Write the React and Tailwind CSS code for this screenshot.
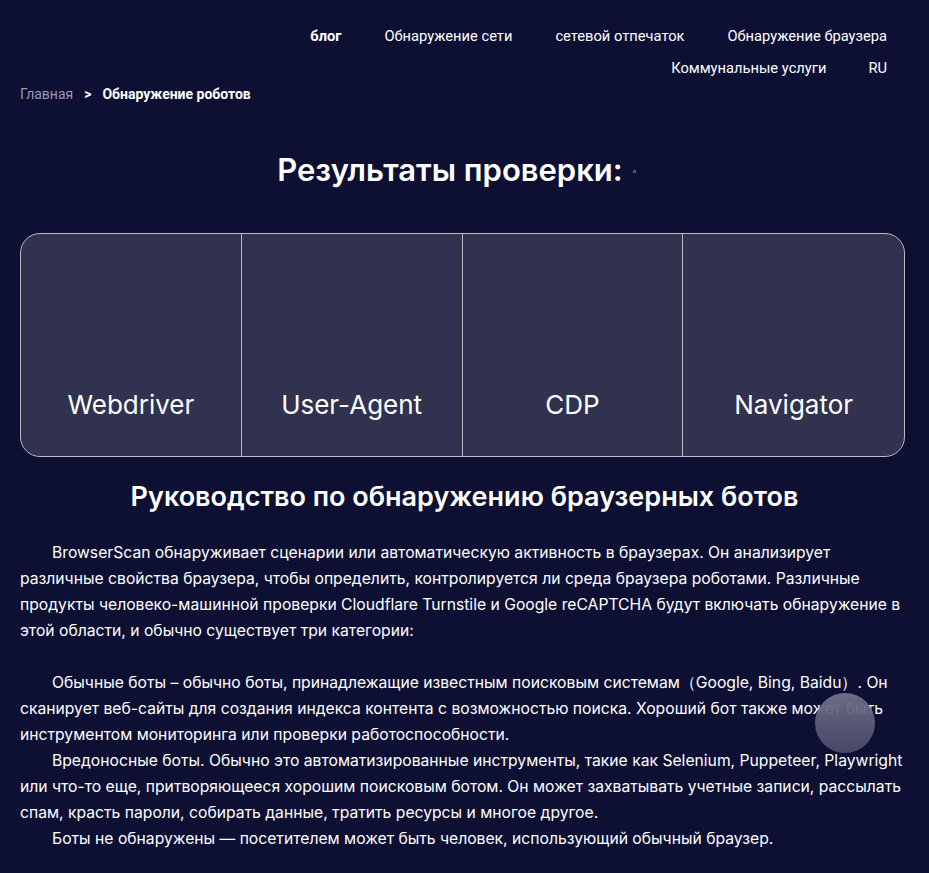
import React from 'react';

const navTop = ['Обнаружение сети', 'сетевой отпечаток', 'Обнаружение браузера'];
const checks = ['Webdriver', 'User-Agent', 'CDP', 'Navigator'];

export default function App() {
  return (
    <div className="min-h-screen bg-[#0d0f33] text-white font-['Inter',sans-serif]">
      <header className="pr-[42px] pt-[26px] flex flex-col items-end gap-[12px] text-[14.7px] font-['Roboto',sans-serif]">
        <nav className="flex items-center gap-[43px] leading-[20px]">
          <a className="font-bold">блог</a>
          {navTop.map((item) => (
            <a key={item}>{item}</a>
          ))}
        </nav>
        <nav className="flex items-center gap-[42px] leading-[20px]">
          <a>Коммунальные услуги</a>
          <a>RU</a>
        </nav>
      </header>

      <div className="px-[20px] mt-[6px] flex items-center gap-[11px] text-[14px] leading-[20px] font-['Roboto',sans-serif]">
        <span className="text-[#9a9bab]">Главная</span>
        <span className="font-bold">&gt;</span>
        <span className="font-bold">Обнаружение роботов</span>
      </div>

      <main className="px-[20px]">
        <div className="mt-[46px] flex items-center justify-center gap-[10px] pr-[16px]">
          <h1 className="text-[31px] leading-[40px] font-semibold">Результаты проверки:</h1>
          <span className="w-[3px] h-[3px] bg-[#2b6d83] mt-[2px]" />
        </div>

        <div className="mt-[43px] w-[885px] grid grid-cols-4 h-[224px] rounded-[20px] border border-[#b9bac6] bg-[#30324f] overflow-hidden">
          {checks.map((c, i) => (
            <div
              key={c}
              className={`flex items-end justify-center pb-[34px] ${i < 3 ? 'border-r border-[#b9bac6]' : ''}`}
            >
              <span className="text-[26px] leading-[34px]">{c}</span>
            </div>
          ))}
        </div>

        <h2 className="mt-[22px] text-center text-[27px] leading-[36px] font-semibold">
          Руководство по обнаружению браузерных ботов
        </h2>

        <div className="mt-[25px] text-[15.7px] leading-[26px]">
          <p className="indent-[32px]">
            BrowserScan обнаруживает сценарии или автоматическую активность в браузерах. Он анализирует различные свойства браузера, чтобы определить, контролируется ли среда браузера роботами. Различные продукты человеко-машинной проверки Cloudflare Turnstile и Google reCAPTCHA будут включать обнаружение в этой области, и обычно существует три категории:
          </p>
          <p className="indent-[32px] mt-[26px]">
            Обычные боты – обычно боты, принадлежащие известным поисковым системам（Google, Bing, Baidu）. Он сканирует веб-сайты для создания индекса контента с возможностью поиска. Хороший бот также может быть инструментом мониторинга или проверки работоспособности.
          </p>
          <p className="indent-[32px]">
            Вредоносные боты. Обычно это автоматизированные инструменты, такие как Selenium, Puppeteer, Playwright или что-то еще, притворяющееся хорошим поисковым ботом. Он может захватывать учетные записи, рассылать спам, красть пароли, собирать данные, тратить ресурсы и многое другое.
          </p>
          <p className="indent-[32px]">
            Боты не обнаружены — посетителем может быть человек, использующий обычный браузер.
          </p>
        </div>
      </main>

      <div className="fixed left-[815px] top-[693px] w-[60px] h-[60px] rounded-full bg-gradient-to-b from-[#707289] via-[#5b5d79] to-[#4a4c6b] opacity-95" />
    </div>
  );
}
